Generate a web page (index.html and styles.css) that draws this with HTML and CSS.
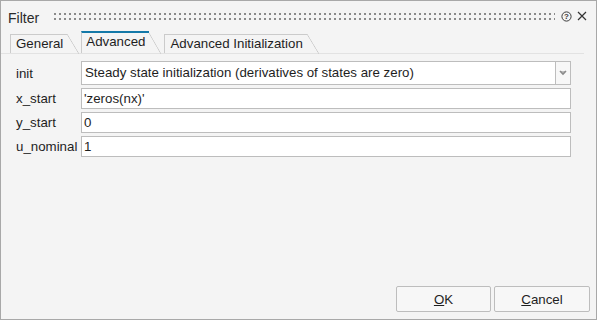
FILE: index.html
```html
<!DOCTYPE html>
<html lang="en">
<head>
    <meta charset="UTF-8">
    <meta name="viewport" content="width=device-width, initial-scale=1.0">
    <title>Filter</title>
    <link rel="stylesheet" href="styles.css">
</head>
<body>
    <div class="window">
        <div class="titlebar">
            <span class="title">Filter</span>
            <div class="grip"></div>
            <svg class="help" width="11" height="11" viewBox="0 0 11 11">
                <circle cx="5.5" cy="5.5" r="4.6" fill="none" stroke="#3a3a3a" stroke-width="1"/>
                <text x="5.5" y="8.3" text-anchor="middle" font-family="Liberation Sans, Arial, sans-serif" font-size="8" font-weight="bold" fill="#3a3a3a">?</text>
            </svg>
            <svg class="close" width="10" height="10" viewBox="0 0 10 10">
                <path d="M1 1 L9 9 M9 1 L1 9" stroke="#333" stroke-width="1.2" fill="none"/>
            </svg>
        </div>

        <div class="tabs">
            <div class="tab">General</div>
            <div class="tab active">Advanced</div>
            <div class="tab">Advanced Initialization</div>
        </div>

        <div class="form">
            <label>init</label>
            <div class="select">
                <div class="select-value">Steady state initialization (derivatives of states are zero)</div>
                <div class="select-button">
                    <svg width="8" height="6" viewBox="0 0 8 6">
                        <path d="M1 1 L4 4 L7 1" stroke="#8a8a8a" stroke-width="1.6" fill="none"/>
                        <path d="M2.5 1 L4 2.5 L5.5 1" stroke="#8a8a8a" stroke-width="1" fill="none"/>
                    </svg>
                </div>
            </div>

            <label>x_start</label>
            <div class="field">'zeros(nx)'</div>

            <label>y_start</label>
            <div class="field">0</div>

            <label>u_nominal</label>
            <div class="field">1</div>
        </div>

        <div class="footer">
            <button class="btn"><u>O</u>K</button>
            <button class="btn"><u>C</u>ancel</button>
        </div>
    </div>
</body>
</html>
```

FILE: styles.css
```css
body {
    margin: 0;
    font-family: 'Liberation Sans', Arial, sans-serif;
    font-size: 13.3px;
    color: #1e1e1e;
}

.window {
    width: 597px;
    height: 320px;
    box-sizing: border-box;
    border: 1px solid #a8a8a8;
    background-color: #f4f4f4;
    display: flex;
    flex-direction: column;
}

.titlebar {
    height: 30px;
    display: flex;
    align-items: center;
    padding: 0 9px 0 7px;
}

.title {
    font-size: 14px;
    color: #2a2a2a;
    margin-top: 3px;
}

.grip {
    flex: 1;
    height: 7px;
    margin: 0 6px 0 15px;
    background-image: radial-gradient(circle at 1px 1px, #8a8a8a 1px, transparent 1px);
    background-size: 5px 5px;
}

.help {
    margin-right: 5px;
}

.tabs {
    display: flex;
    align-items: flex-end;
    height: 22px;
    padding-left: 9px;
    margin-right: 12px;
    border-bottom: 1px solid #e2e2e2;
}

.tab {
    position: relative;
    height: 18px;
    line-height: 18px;
    padding: 0 4px 0 5px;
    margin-right: 15px;
    border-left: 1px solid #cbcbcb;
    border-top: 1px solid #cbcbcb;
}

.tab::after {
    content: '';
    position: absolute;
    top: -1px;
    bottom: -1px;
    left: 100%;
    width: 12px;
    background: linear-gradient(to top right, transparent calc(50% - 0.7px), #cbcbcb 50%, transparent calc(50% + 0.7px));
}

.tab.active {
    height: 20px;
    line-height: 18px;
    padding-left: 4px;
    border-top: 2px solid #1479a8;
    margin-left: -1px;
}

.tab.active::after {
    top: 0;
}

.form {
    display: grid;
    grid-template-columns: 65px 1fr;
    row-gap: 3px;
    align-items: center;
    padding: 7px 25px 0 15px;
}

.form label {
    white-space: nowrap;
}

.select {
    display: flex;
    height: 24px;
}

.select-value {
    flex: 1;
    background-color: #fff;
    border: 1px solid #bdbdbd;
    padding-left: 3px;
    line-height: 22px;
}

.select-button {
    width: 14px;
    border: 1px solid #bdbdbd;
    border-left: none;
    background-color: #f7f7f7;
    display: flex;
    align-items: center;
    justify-content: center;
}

.field {
    height: 21px;
    box-sizing: border-box;
    background-color: #fff;
    border: 1px solid #bdbdbd;
    padding-left: 2px;
    line-height: 19px;
}

.footer {
    margin-top: auto;
    display: flex;
    justify-content: flex-end;
    gap: 3px;
    padding: 0 6px 7px 0;
}

.btn {
    width: 95px;
    height: 26px;
    font-family: inherit;
    font-size: 13.3px;
    color: #1e1e1e;
    background-color: #f7f7f7;
    border: 1px solid #bdbdbd;
    border-radius: 2px;
}

.btn:last-child {
    width: 96px;
}
```
